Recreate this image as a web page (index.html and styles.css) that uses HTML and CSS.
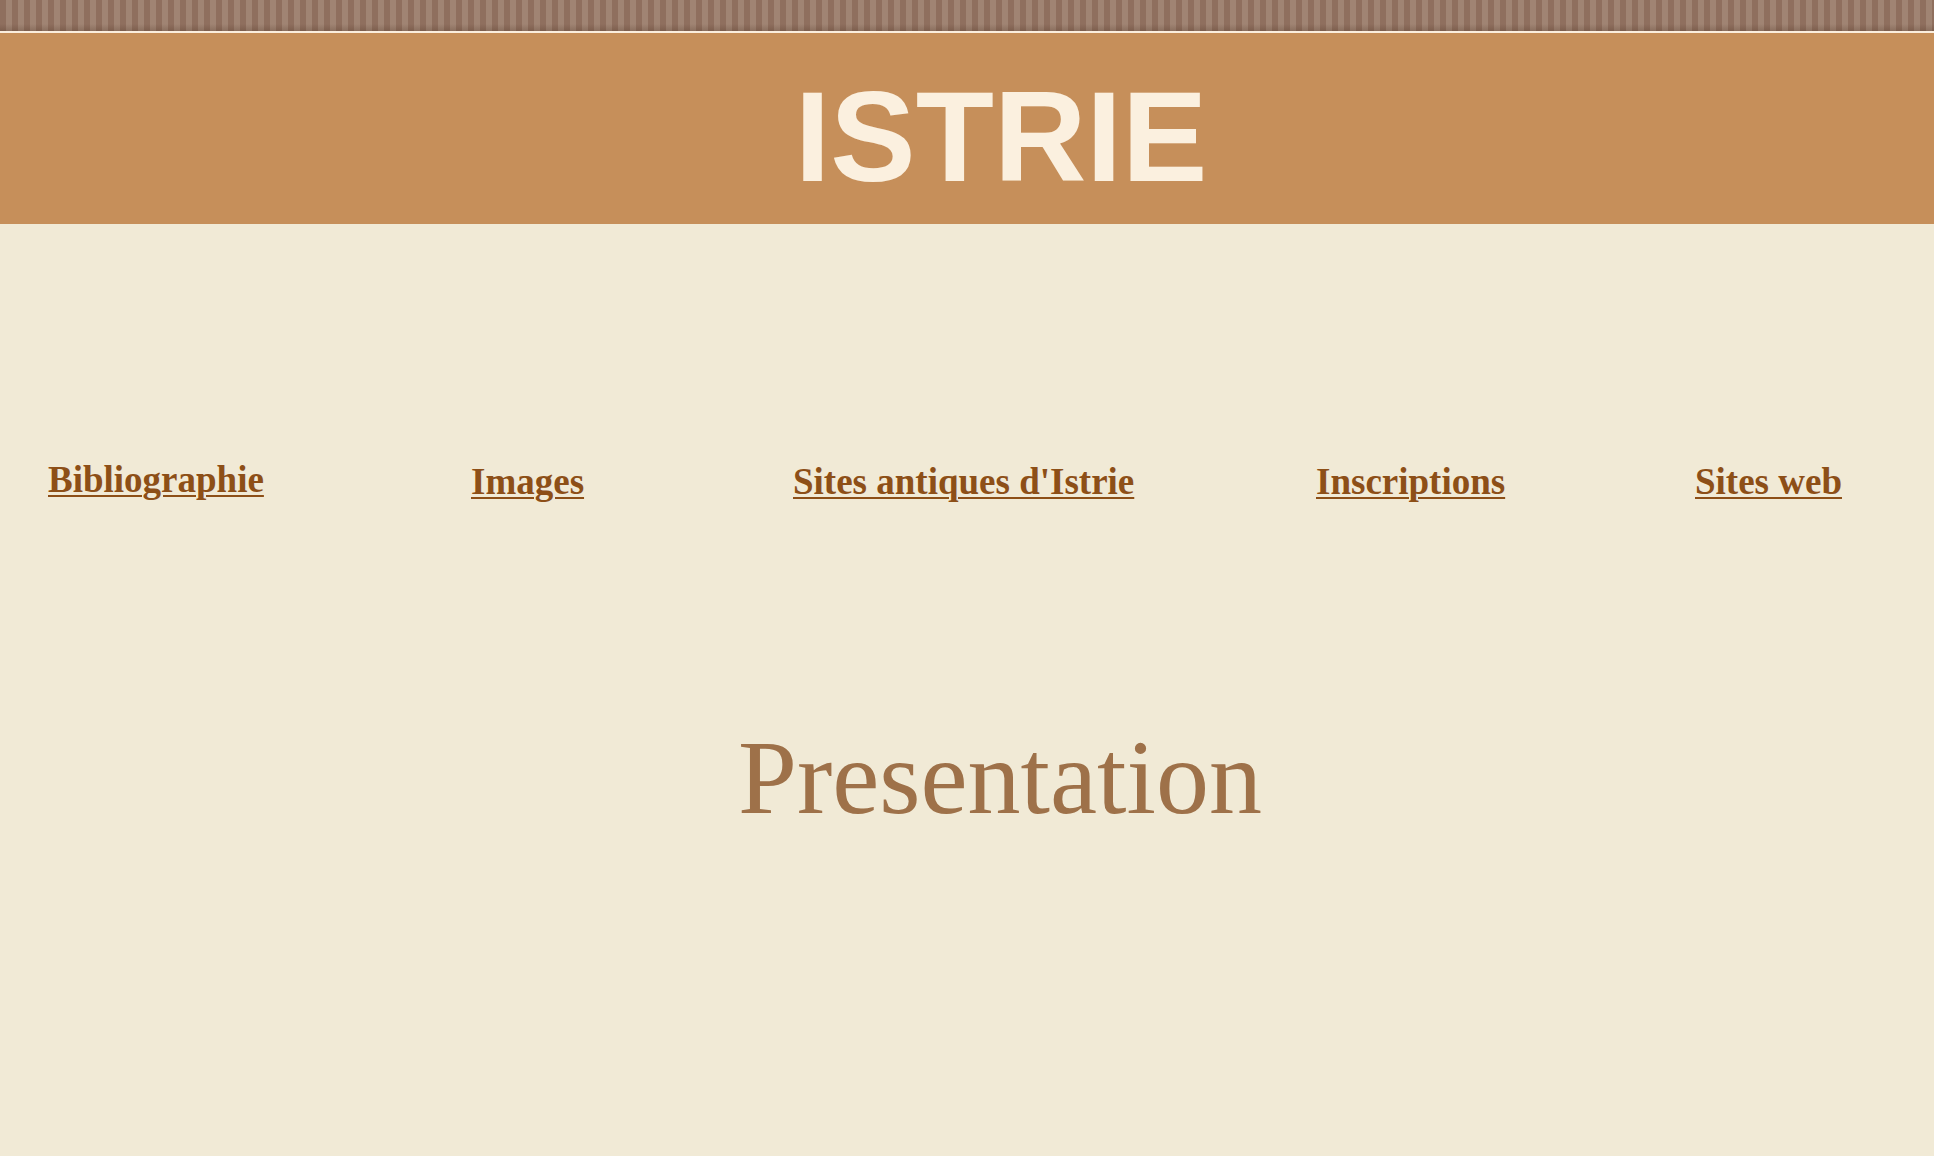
FILE: index.html
```html
<!DOCTYPE html>
<html lang="fr">
<head>
<meta charset="utf-8">
<title>Istrie</title>
<link rel="stylesheet" href="styles.css">
</head>
<body>
<div class="stripe"></div>
<header class="banner">
  <h1 class="title">ISTRIE</h1>
</header>
<nav class="nav">
  <a class="nav-link nav-first" href="#">Bibliographie</a>
  <a class="nav-link" href="#">Images</a>
  <a class="nav-link" href="#">Sites antiques d'Istrie</a>
  <a class="nav-link" href="#">Inscriptions</a>
  <a class="nav-link" href="#">Sites web</a>
</nav>
<main class="content">
  <h2 class="heading">Presentation</h2>
</main>
</body>
</html>
```

FILE: styles.css
```css
html, body {
  margin: 0;
  padding: 0;
}
body {
  background: #f1ead6;
  font-family: "Liberation Serif", "Times New Roman", serif;
  min-height: 1156px;
  overflow: hidden;
}
.stripe {
  height: 31px;
  background:
    linear-gradient(to bottom, rgba(0,0,0,0) 0, rgba(0,0,0,0) 24px, rgba(60,35,20,0.22) 31px),
    repeating-linear-gradient(to right, #8f6f5e 0, #8f6f5e 6px, #a08473 6px, #a08473 12px);
  border-bottom: 2px solid #fbeedd;
}
.banner {
  background: #c68f5a;
  height: 191px;
  display: flex;
  justify-content: center;
  padding-left: 68px;
}
.title {
  margin: 0;
  font-family: "Liberation Sans", Arial, sans-serif;
  font-weight: bold;
  font-size: 128px;
  line-height: 1;
  color: #fbf0df;
  padding-top: 40px;
}
.nav {
  display: grid;
  grid-template-columns: 423px 322px 523px 379px auto;
  padding-left: 48px;
  padding-top: 239px;
}
.nav-link {
  font-family: "Liberation Serif", "Times New Roman", serif;
  font-weight: bold;
  font-size: 37px;
  line-height: 1;
  color: #8d4f17;
  text-decoration: underline;
  text-decoration-thickness: 2px;
  text-underline-offset: 3px;
  justify-self: start;
}
.nav-first {
  margin-top: -2px;
}
.content {
  display: flex;
  justify-content: center;
  padding-left: 66px;
  padding-top: 225px;
}
.heading {
  margin: 0;
  font-weight: normal;
  font-size: 106px;
  line-height: 1;
  color: #9e7149;
}
```
